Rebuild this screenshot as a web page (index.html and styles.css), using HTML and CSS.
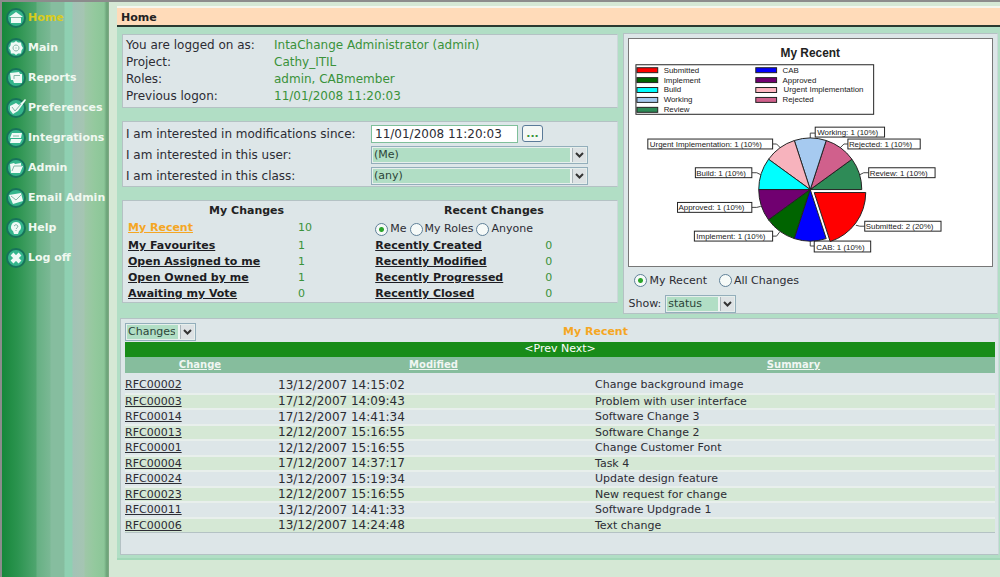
FILE: index.html
```html
<!DOCTYPE html>
<html lang="en">
<head>
<meta charset="UTF-8">
<meta name="viewport" content="width=device-width, initial-scale=1.0">
<title>Home</title>
<link rel="stylesheet" href="styles.css">
</head>
<body>
<div class="page">
<nav class="sidebar">
<a href="#" class="active"><svg class="icon" viewBox="0 0 20 20"><circle cx="10" cy="10" r="9"/><path class="fill" d="M10 4l7 5h-2v6H5V9H3z"/><path class="cut" d="M5 9.500h10"/></svg>Home</a>
<a href="#"><svg class="icon" viewBox="0 0 20 20"><circle cx="10" cy="10" r="9"/><path class="fill" d="M10 3l2 1.500 3 0 .5 3 1.500 2.500-1.500 2.500-.5 3-3 0-2 1.500-2-1.500-3 0-.5-3L3 10 4.500 7.500 5 4.500 8 4.500z"/><path class="cut" d="M10 7a3 3 0 1 0 .01 0zM10 9.500v1"/></svg>Main</a>
<a href="#"><svg class="icon" viewBox="0 0 20 20"><circle cx="10" cy="10" r="9"/><path class="fill" d="M4 5l9-1 1 2h2v9H8l-1-3H5z"/><path class="cut" d="M8 11V7.500h6"/></svg>Reports</a>
<a href="#"><svg class="icon" viewBox="0 0 20 20"><circle cx="10" cy="10" r="9"/><path class="fill" d="M4 8l6-3 3 2 6-6 1 1-8 11-5 3-3-4z"/><path class="cut" d="M6 9l3 4 6-7"/></svg>Preferences</a>
<a href="#"><svg class="icon" viewBox="0 0 20 20"><circle cx="10" cy="10" r="9"/><path class="fill" d="M6 5h10l-1 5H4zM5 11h11l-2 4H4z"/><path class="cut" d="M7 8h6"/></svg>Integrations</a>
<a href="#"><svg class="icon" viewBox="0 0 20 20"><circle cx="10" cy="10" r="9"/><path class="fill" d="M4 6l4-1 1 1 6-1v3h2l-3 7H5z"/><path class="cut" d="M6 13l2-5h8"/></svg>Admin</a>
<a href="#"><svg class="icon" viewBox="0 0 20 20"><circle cx="10" cy="10" r="9"/><path class="fill" d="M3 7l12-2 2 8-10 3z"/><path class="cut" d="M5 8l5 4 6-6"/></svg>Email Admin</a>
<a href="#"><svg class="icon" viewBox="0 0 20 20"><circle cx="10" cy="10" r="9"/><path class="fill" d="M10 4a5 5 0 0 1 3 9l-1 3H8l-1-3a5 5 0 0 1 3-9z"/><path class="cut" d="M8 8q2-3 4 0q0 1-2 3M10 12v1"/></svg>Help</a>
<a href="#"><svg class="icon" viewBox="0 0 20 20"><circle cx="10" cy="10" r="9"/><path class="cross" d="M6 6l8 8M14 6l-8 8"/></svg>Log off</a>
</nav>

<main>
<h1>Home</h1>
<div class="content">
<div class="top">
<div class="left">
<dl class="box info">
<dt>You are logged on as:</dt><dd>IntaChange Administrator (admin)</dd>
<dt>Project:</dt><dd>Cathy_ITIL</dd>
<dt>Roles:</dt><dd>admin, CABmember</dd>
<dt>Previous logon:</dt><dd>11/01/2008 11:20:03</dd>
</dl>

<form class="box filters">
<label for="since">I am interested in modifications since:</label>
<div class="since"><input type="text" id="since" value="11/01/2008 11:20:03"><button type="button">...</button></div>
<label for="user">I am interested in this user:</label>
<select id="user"><option>(Me)</option></select>
<label for="class">I am interested in this class:</label>
<select id="class"><option>(any)</option></select>
</form>

<div class="box changes">
<section>
<h2>My Changes</h2>
<ul>
<li class="first"><a href="#" class="current">My Recent</a><span>10</span></li>
<li><a href="#">My Favourites</a><span>1</span></li>
<li><a href="#">Open Assigned to me</a><span>1</span></li>
<li><a href="#">Open Owned by me</a><span>1</span></li>
<li><a href="#">Awaiting my Vote</a><span>0</span></li>
</ul>
</section>
<section>
<h2>Recent Changes</h2>
<div class="radios who">
<label><input type="radio" name="who" checked>Me</label>
<label><input type="radio" name="who">My Roles</label>
<label><input type="radio" name="who">Anyone</label>
</div>
<ul>
<li><a href="#">Recently Created</a><span>0</span></li>
<li><a href="#">Recently Modified</a><span>0</span></li>
<li><a href="#">Recently Progressed</a><span>0</span></li>
<li><a href="#">Recently Closed</a><span>0</span></li>
</ul>
</section>
</div>
</div>

<div class="box right">
<svg class="chart" viewBox="0 0 366 229">
<text class="title" x="183" y="18">My Recent</text>
<!-- legend -->
<rect class="frame" x="7" y="26" width="240" height="50"/>
<g class="keys">
<rect x="8" y="29" width="21" height="5" fill="#f00"/><text x="35" y="34">Submitted</text>
<rect x="8" y="39" width="21" height="5" fill="#006400"/><text x="35" y="44">Implement</text>
<rect x="8" y="49" width="21" height="5" fill="#0ff"/><text x="35" y="54">Build</text>
<rect x="8" y="59" width="21" height="5" fill="#a6caf0"/><text x="35" y="64">Working</text>
<rect x="8" y="69" width="21" height="5" fill="#2e8b57"/><text x="35" y="74">Review</text>
<rect x="128" y="29" width="21" height="5" fill="#00f"/><text x="155" y="34">CAB</text>
<rect x="128" y="39" width="21" height="5" fill="#700070"/><text x="155" y="44">Approved</text>
<rect x="128" y="49" width="21" height="5" fill="#ffb6c1"/><text x="156" y="54">Urgent Implementation</text>
<rect x="128" y="59" width="21" height="5" fill="#d0608c"/><text x="155" y="64">Rejected</text>
</g>
<!-- labels -->
<path class="lead" d="M183 100v-5h5M145 106h4l4 4M221 106h-4l-5 5M124 135h5l4 2M242 135h-5l-4 2M124 170h5l4-1M145 199h4l3-4M238 189h-5l-4-1M183 204v5h4"/>
<g class="labels">
<rect x="188" y="89" width="70" height="10"/><text x="190" y="97">Working: 1 (10%)</text>
<rect x="19" y="101" width="126" height="10"/><text x="21" y="109">Urgent Implementation: 1 (10%)</text>
<rect x="221" y="101" width="73" height="10"/><text x="222" y="109">Rejected: 1 (10%)</text>
<rect x="67" y="130" width="57" height="10"/><text x="68" y="138">Build: 1 (10%)</text>
<rect x="242" y="130" width="67" height="10"/><text x="243" y="138">Review: 1 (10%)</text>
<rect x="49" y="165" width="75" height="10"/><text x="50" y="173">Approved: 1 (10%)</text>
<rect x="66" y="194" width="79" height="10"/><text x="68" y="202">Implement: 1 (10%)</text>
<rect x="238" y="184" width="77" height="10"/><text x="239" y="192">Submitted: 2 (20%)</text>
<rect x="187" y="204" width="57" height="11"/><text x="189" y="213">CAB: 1 (10%)</text>
</g>
<!-- pie -->
<g class="pie">
<path fill="#2e8b57" d="M183 152H235A52 52 0 0 0 225.100 121.400z"/>
<path fill="#d0608c" d="M183 152L225.100 121.400A52 52 0 0 0 199.100 102.500z"/>
<path fill="#a6caf0" d="M183 152L199.100 102.500A52 52 0 0 0 166.900 102.500z"/>
<path fill="#f7b3bd" d="M183 152L166.900 102.500A52 52 0 0 0 140.900 121.400z"/>
<path fill="#0ff" d="M183 152L140.900 121.400A52 52 0 0 0 131 152z"/>
<path fill="#700070" d="M183 152H131A52 52 0 0 0 140.900 182.600z"/>
<path fill="#006400" d="M183 152L140.900 182.600A52 52 0 0 0 166.900 201.500z"/>
<path fill="#00f" d="M183 152L166.900 201.500A52 52 0 0 0 199.100 201.500z"/>
<path fill="#f00" d="M187 155L203.100 204.500A52 52 0 0 0 239 155z"/>
</g>
</svg>
<div class="radios scope">
<label><input type="radio" name="scope" checked>My Recent</label>
<label><input type="radio" name="scope">All Changes</label>
</div>
<div class="show"><label for="show">Show:</label><select id="show"><option>status</option></select></div>
</div>
</div>

<div class="box list">
<div class="list-head">
<select aria-label="List type"><option>Changes</option></select>
<h2>My Recent</h2>
</div>
<div class="pager"><a href="#">&lt;Prev</a> <a href="#">Next&gt;</a></div>
<table>
<thead>
<tr><th class="id"><a href="#">Change</a></th><th class="date"><a href="#">Modified</a></th><th><a href="#">Summary</a></th></tr>
</thead>
<tbody>
<tr><td><a href="#">RFC00002</a></td><td>13/12/2007 14:15:02</td><td>Change background image</td></tr>
<tr><td><a href="#">RFC00003</a></td><td>17/12/2007 14:09:43</td><td>Problem with user interface</td></tr>
<tr><td><a href="#">RFC00014</a></td><td>17/12/2007 14:41:34</td><td>Software Change 3</td></tr>
<tr><td><a href="#">RFC00013</a></td><td>12/12/2007 15:16:55</td><td>Software Change 2</td></tr>
<tr><td><a href="#">RFC00001</a></td><td>12/12/2007 15:16:55</td><td>Change Customer Font</td></tr>
<tr><td><a href="#">RFC00004</a></td><td>17/12/2007 14:37:17</td><td>Task 4</td></tr>
<tr><td><a href="#">RFC00024</a></td><td>13/12/2007 15:19:34</td><td>Update design feature</td></tr>
<tr><td><a href="#">RFC00023</a></td><td>12/12/2007 15:16:55</td><td>New request for change</td></tr>
<tr><td><a href="#">RFC00011</a></td><td>13/12/2007 14:41:33</td><td>Software Updgrade 1</td></tr>
<tr><td><a href="#">RFC00006</a></td><td>13/12/2007 14:24:48</td><td>Text change</td></tr>
</tbody>
</table>
</div>
</div>
</main>
</div>
</body>
</html>
```
FILE: styles.css
```css
:root {
--bg: #d5e8d5;
--panel: #b1dec5;
--box: #dde6e8;
--line: #b4c2c4;
--green: #3a923a;
--text: #2c2c34;
--orange: #f5a623;
}

* {
box-sizing: border-box;
}

body {
margin: 0;
background: var(--bg);
color: var(--text);
font-family: Verdana, "DejaVu Sans", sans-serif;
font-size: 11px;
line-height: 16px;
}

h1, h2, ul, dl, dd {
margin: 0;
padding: 0;
}

.page {
display: flex;
min-height: 100vh;
border-top: 2px solid #8c8c8c;
border-left: 2px solid #8c8c8c;
}

.sidebar {
flex: 0 0 107px;
background: linear-gradient(90deg, #17873a 0, #2c9450 16px, #4fa56f 34px, #66b083 35px, #7ab894 48px, #86bd9f 49px, #86bd9f 62px, #8fd0b2 63px, #8fd0b2 70px, #a2c3b6 71px, #a5c5b2 82px, #9fc7a8 83px, #93c99d 93px, #8cc698 102px, #6aa277 105px, #82ac86 107px);
padding: 1px 0 0 4px;
}

.sidebar a {
display: flex;
align-items: center;
gap: 2px;
height: 30px;
color: #f0f8f0;
font-weight: bold;
text-decoration: none;
white-space: nowrap;
}

.sidebar a.active {
color: #d9cc1c;
}

.icon {
flex: none;
width: 20px;
height: 20px;
}

.icon circle {
fill: #35b58c;
stroke: #17735a;
stroke-width: 2;
}

.icon .fill {
fill: #f0faf6;
}

.icon .cut {
fill: none;
stroke: #84b8a8;
}

.icon .cross {
fill: none;
stroke: #f0faf6;
stroke-width: 4;
}

main {
flex: 1;
min-width: 0;
padding: 4px 0 16px 8px;
}

h1 {
height: 21px;
padding: 3px 4px 0;
border-top: 2px solid #f4f6ee;
border-bottom: 2px solid #2a3a30;
background: #ffdbb9;
color: #222;
font-size: 11px;
line-height: 14px;
}

.content {
padding: 6px 1px 3px 3px;
border-bottom: 2px solid #a2d8b8;
background: var(--panel);
}

.box {
background: var(--box);
border: 1px solid var(--line);
border-right-color: #ccd8da;
}

.top {
display: grid;
grid-template-columns: 57fr 43fr;
gap: 5px;
padding: 0 1px 4px 2px;
}

.left {
display: flex;
flex-direction: column;
gap: 13px;
padding-top: 1px;
}

.info {
display: grid;
grid-template-columns: 148px 1fr;
padding: 2px 3px;
font-size: 12px;
line-height: 17px;
}

.info dd {
color: var(--green);
}

.filters {
display: grid;
grid-template-columns: 245px 217px;
align-items: center;
grid-auto-rows: 18px;
row-gap: 3px;
padding: 3px 3px 1px;
font-size: 12px;
}

.since {
display: flex;
gap: 4px;
}

input[type="text"] {
width: 147px;
height: 18px;
padding: 0 3px;
border: 1px solid #7fbf9a;
background: #fff;
color: var(--text);
font: inherit;
}

.since button {
width: 21px;
height: 17px;
padding: 0;
border: 1px solid #5a7a98;
border-radius: 3px;
background: #f4f7f5;
color: var(--green);
font: bold 11px/11px Verdana, "DejaVu Sans", sans-serif;
}

select {
appearance: none;
height: 18px;
padding: 0 20px 0 2px;
border: 1px solid #93aebb;
background-color: var(--panel);
background-image: url("data:image/svg+xml,%3Csvg xmlns='http://www.w3.org/2000/svg' width='17' height='16'%3E%3Crect width='17' height='16' fill='%23eef3f3'/%3E%3Crect x='2.5' y='.5' width='14' height='15' fill='%23dde2e4' stroke='%23aab5ba'/%3E%3Cpath d='M6 6l3.500 3.500L13 6' fill='none' stroke='%23333' stroke-width='2'/%3E%3C/svg%3E");
background-repeat: no-repeat;
background-position: right center;
box-shadow: inset 0 0 0 1px #e6efec;
color: #2c4438;
font: 11px/14px Verdana, "DejaVu Sans", sans-serif;
}

.changes {
display: grid;
grid-template-columns: 1fr 1fr;
}

.changes h2 {
font-size: 11px;
line-height: 19px;
text-align: center;
color: #222;
}

.changes ul {
list-style: none;
padding: 0 5px;
}

.changes li {
display: grid;
grid-template-columns: 170px 1fr;
height: 16px;
}

.changes li.first {
height: 18px;
}

.changes li a {
color: #1c1c22;
font-weight: bold;
}

.changes li a.current {
color: var(--orange);
}

.changes li span {
color: var(--green);
}

.radios {
display: flex;
align-items: center;
}

.radios label {
display: flex;
align-items: center;
gap: 2px;
}

.who {
gap: 3px;
height: 18px;
padding-left: 5px;
}

input[type="radio"] {
appearance: none;
width: 13px;
height: 13px;
margin: 0;
border: 1px solid #5f8098;
border-radius: 50%;
background: #f6faf8;
}

input[type="radio"]:checked {
background: radial-gradient(circle, #2ca52c 2px, #f6faf8 3px);
}

.right {
padding: 4px 4px 0;
}

.chart {
display: block;
width: 100%;
border: 1px solid #777;
background: #fff;
font-family: "Liberation Sans", Arial, sans-serif;
}

.chart .title {
font-size: 12px;
font-weight: bold;
text-anchor: middle;
}

.chart text {
fill: #222;
}

.frame, .keys rect, .labels rect, .pie path {
stroke: #222;
stroke-width: 1;
}

.frame, .lead {
fill: none;
}

.lead {
stroke: #444;
}

.keys, .labels {
font-size: 8px;
}

.labels rect {
fill: #fff;
}

.scope {
gap: 12px;
height: 28px;
padding-left: 6px;
}

.show {
display: flex;
align-items: center;
gap: 4px;
}

.show select {
width: 71px;
}

.list {
padding: 3px 3px 21px 4px;
}

.list-head {
display: grid;
grid-template-columns: 71px 1fr;
align-items: center;
height: 20px;
}

.list-head h2 {
color: var(--orange);
font-size: 11px;
text-align: center;
}

.pager {
height: 15px;
background: #188c18;
line-height: 14px;
text-align: center;
}

.pager a {
color: #fff;
text-decoration: none;
}

table {
width: 100%;
border-collapse: collapse;
border-bottom: 1px solid var(--line);
table-layout: fixed;
}

th {
height: 17px;
padding: 0;
background: #86bd9d;
font-size: 10px;
line-height: 16px;
}

th a {
color: #f0f6f2;
}

.id {
width: 150px;
}

.date {
width: 317px;
}

td {
height: 16px;
padding: 0 3px;
border-top: 2px solid #e8efec;
line-height: 14px;
}

td:first-child {
padding-left: 0;
}

td:nth-child(2) {
font-size: 12px;
}

td a {
color: var(--text);
}

tbody tr:first-child td {
height: 19px;
border-top-width: 4px;
border-top-color: var(--box);
}

tbody tr:nth-child(even) {
background: var(--bg);
}

tbody tr:nth-child(even) td {
height: 15px;
line-height: 13px;
}
```
